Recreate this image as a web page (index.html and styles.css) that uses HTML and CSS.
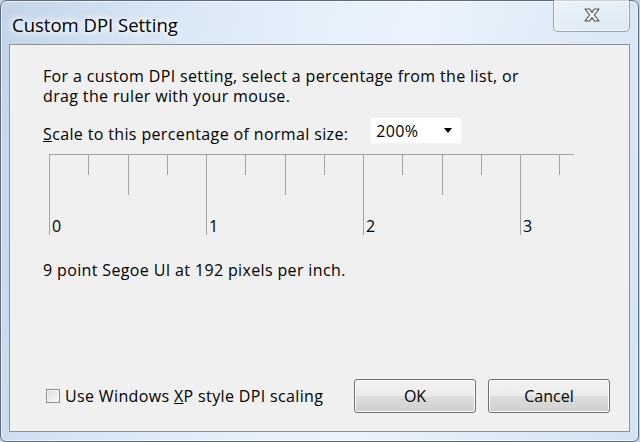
FILE: index.html
```html
<!DOCTYPE html>
<html lang="en">
<head>
    <meta charset="UTF-8">
    <title>Custom DPI Setting</title>
    <link rel="stylesheet" href="styles.css">
</head>
<body>
    <div class="window">
        <!-- Title bar -->
        <div class="titlebar">
            <div class="title">Custom DPI Setting</div>
            <div class="close-btn">
                <svg width="16" height="14" viewBox="0 0 16 14">
                    <path d="M1 1 H5.6 L8 4.4 L10.4 1 H15 L10.4 7 L15 13 H10.4 L8 9.6 L5.6 13 H1 L5.6 7 Z" fill="#f2f2f2" stroke="#555" stroke-width="1.2" stroke-linejoin="round"/>
                </svg>
            </div>
        </div>

        <!-- Dialog body -->
        <div class="client">
            <p class="intro">For a custom DPI setting, select a percentage from the list, or<br>drag the ruler with your mouse.</p>

            <div class="scale-row">
                <label class="scale-label"><u>S</u>cale to this percentage of normal size:</label>
                <div class="dropdown">
                    <span>200%</span>
                    <span class="arrow"></span>
                </div>
            </div>

            <div class="ruler">
                <div class="inch">
                    <div class="tick major"><span>0</span></div>
                    <div class="tick quarter"></div>
                    <div class="tick half"></div>
                    <div class="tick quarter"></div>
                </div>
                <div class="inch">
                    <div class="tick major"><span>1</span></div>
                    <div class="tick quarter"></div>
                    <div class="tick half"></div>
                    <div class="tick quarter"></div>
                </div>
                <div class="inch">
                    <div class="tick major"><span>2</span></div>
                    <div class="tick quarter"></div>
                    <div class="tick half"></div>
                    <div class="tick quarter"></div>
                </div>
                <div class="inch last">
                    <div class="tick major"><span>3</span></div>
                    <div class="tick quarter"></div>
                </div>
            </div>

            <p class="info">9 point Segoe UI at 192 pixels per inch.</p>

            <div class="bottom-row">
                <label class="check">
                    <span class="box"></span>
                    <span>Use Windows <u>X</u>P style DPI scaling</span>
                </label>
                <div class="buttons">
                    <button class="btn">OK</button>
                    <button class="btn">Cancel</button>
                </div>
            </div>
        </div>
    </div>
</body>
</html>
```

FILE: styles.css
```css
* {
    margin: 0;
    padding: 0;
    box-sizing: border-box;
}

body {
    width: 640px;
    height: 442px;
    overflow: hidden;
    background-color: #c4d3e4;
    font-family: "Open Sans", "Noto Sans", "DejaVu Sans", sans-serif;
    color: #000;
}

/* Window frame (glass) */
.window {
    width: 639px;
    height: 442px;
    border: 1px solid #5f6c7d;
    border-radius: 7px 7px 6px 6px;
    background: linear-gradient(100deg, #c3d4ea 0%, #d6e4f4 20%, #e6f0fb 45%, #eaf3fd 60%, #dce8f5 85%, #d2e2f3 100%);
    box-shadow: inset 0 0 0 1px rgba(255, 255, 255, 0.6);
    padding: 0 0 0 8px;
}

.titlebar {
    height: 43px;
    display: flex;
    justify-content: space-between;
    align-items: flex-start;
}

.title {
    font-size: 18.5px;
    padding: 11px 0 0 3px;
    text-shadow: 0 0 6px #fff, 0 0 10px #fff, 0 0 10px #fff;
}

.close-btn {
    width: 77px;
    height: 32px;
    margin-top: -1px;
    margin-right: 8px;
    border: 1px solid rgba(90, 100, 120, 0.55);
    border-top: none;
    border-radius: 0 0 5px 5px;
    background: linear-gradient(to bottom, rgba(255, 255, 255, 0.35), rgba(255, 255, 255, 0.1));
    box-shadow: inset 0 0 0 1px rgba(255, 255, 255, 0.5);
    display: flex;
    justify-content: center;
    align-items: center;
    padding-bottom: 1px;
}

/* Client area */
.client {
    width: 621px;
    height: 388px;
    background-color: #f0f0f0;
    border: 1px solid #8a929c;
    padding: 21px 0 0 33px;
    display: flex;
    flex-direction: column;
    font-size: 16px;
    line-height: 20px;
    letter-spacing: 0.36px;
}

.scale-row {
    display: flex;
    align-items: flex-end;
    margin-top: 11px;
}

.dropdown {
    width: 92px;
    height: 27px;
    margin-left: 22px;
    background-color: #fff;
    border: 1px solid #f4f4f4;
    display: flex;
    justify-content: space-between;
    align-items: center;
    padding: 0 9px 0 5px;
}

.arrow {
    width: 0;
    height: 0;
    border-left: 4px solid transparent;
    border-right: 4px solid transparent;
    border-top: 5px solid #000;
}

/* Ruler */
.ruler {
    width: 525px;
    height: 81px;
    margin: 10px 0 0 6px;
    border-top: 1px solid #a3a3a3;
    display: flex;
}

.inch {
    flex: 0 0 157px;
    display: flex;
    align-items: flex-start;
}

.inch.last {
    flex-basis: 54px;
}

.tick {
    flex: 0 0 39.25px;
    border-left: 1px solid #a3a3a3;
}

.quarter {
    height: 20px;
}

.half {
    height: 40px;
}

.major {
    height: 80px;
    display: flex;
    align-items: flex-end;
    padding-left: 2px;
    line-height: 22px;
    margin-bottom: -4px;
}

.major span {
    position: relative;
    top: 2px;
}

.info {
    margin-top: 25px;
}

/* Bottom row */
.bottom-row {
    margin-top: auto;
    margin-bottom: 18px;
    margin-left: 3px;
    padding-right: 19px;
    display: flex;
    justify-content: space-between;
    align-items: center;
}

.check {
    display: flex;
    align-items: center;
    gap: 5px;
}

.box {
    width: 14px;
    height: 14px;
    border: 1px solid #8e8f8f;
    background: linear-gradient(135deg, #dcdcdc, #f8f8f8);
    box-shadow: inset 0 0 0 1px #f4f4f4;
}

.buttons {
    display: flex;
    gap: 12px;
}

.btn {
    width: 122px;
    height: 34px;
    font-family: inherit;
    font-size: 16px;
    color: #000;
    border: 1px solid #707070;
    border-radius: 3px;
    background: linear-gradient(to bottom, #f2f2f2 0%, #ebebeb 48%, #dddddd 52%, #cfcfcf 100%);
    box-shadow: inset 0 0 0 1px #fcfcfc;
}
```
